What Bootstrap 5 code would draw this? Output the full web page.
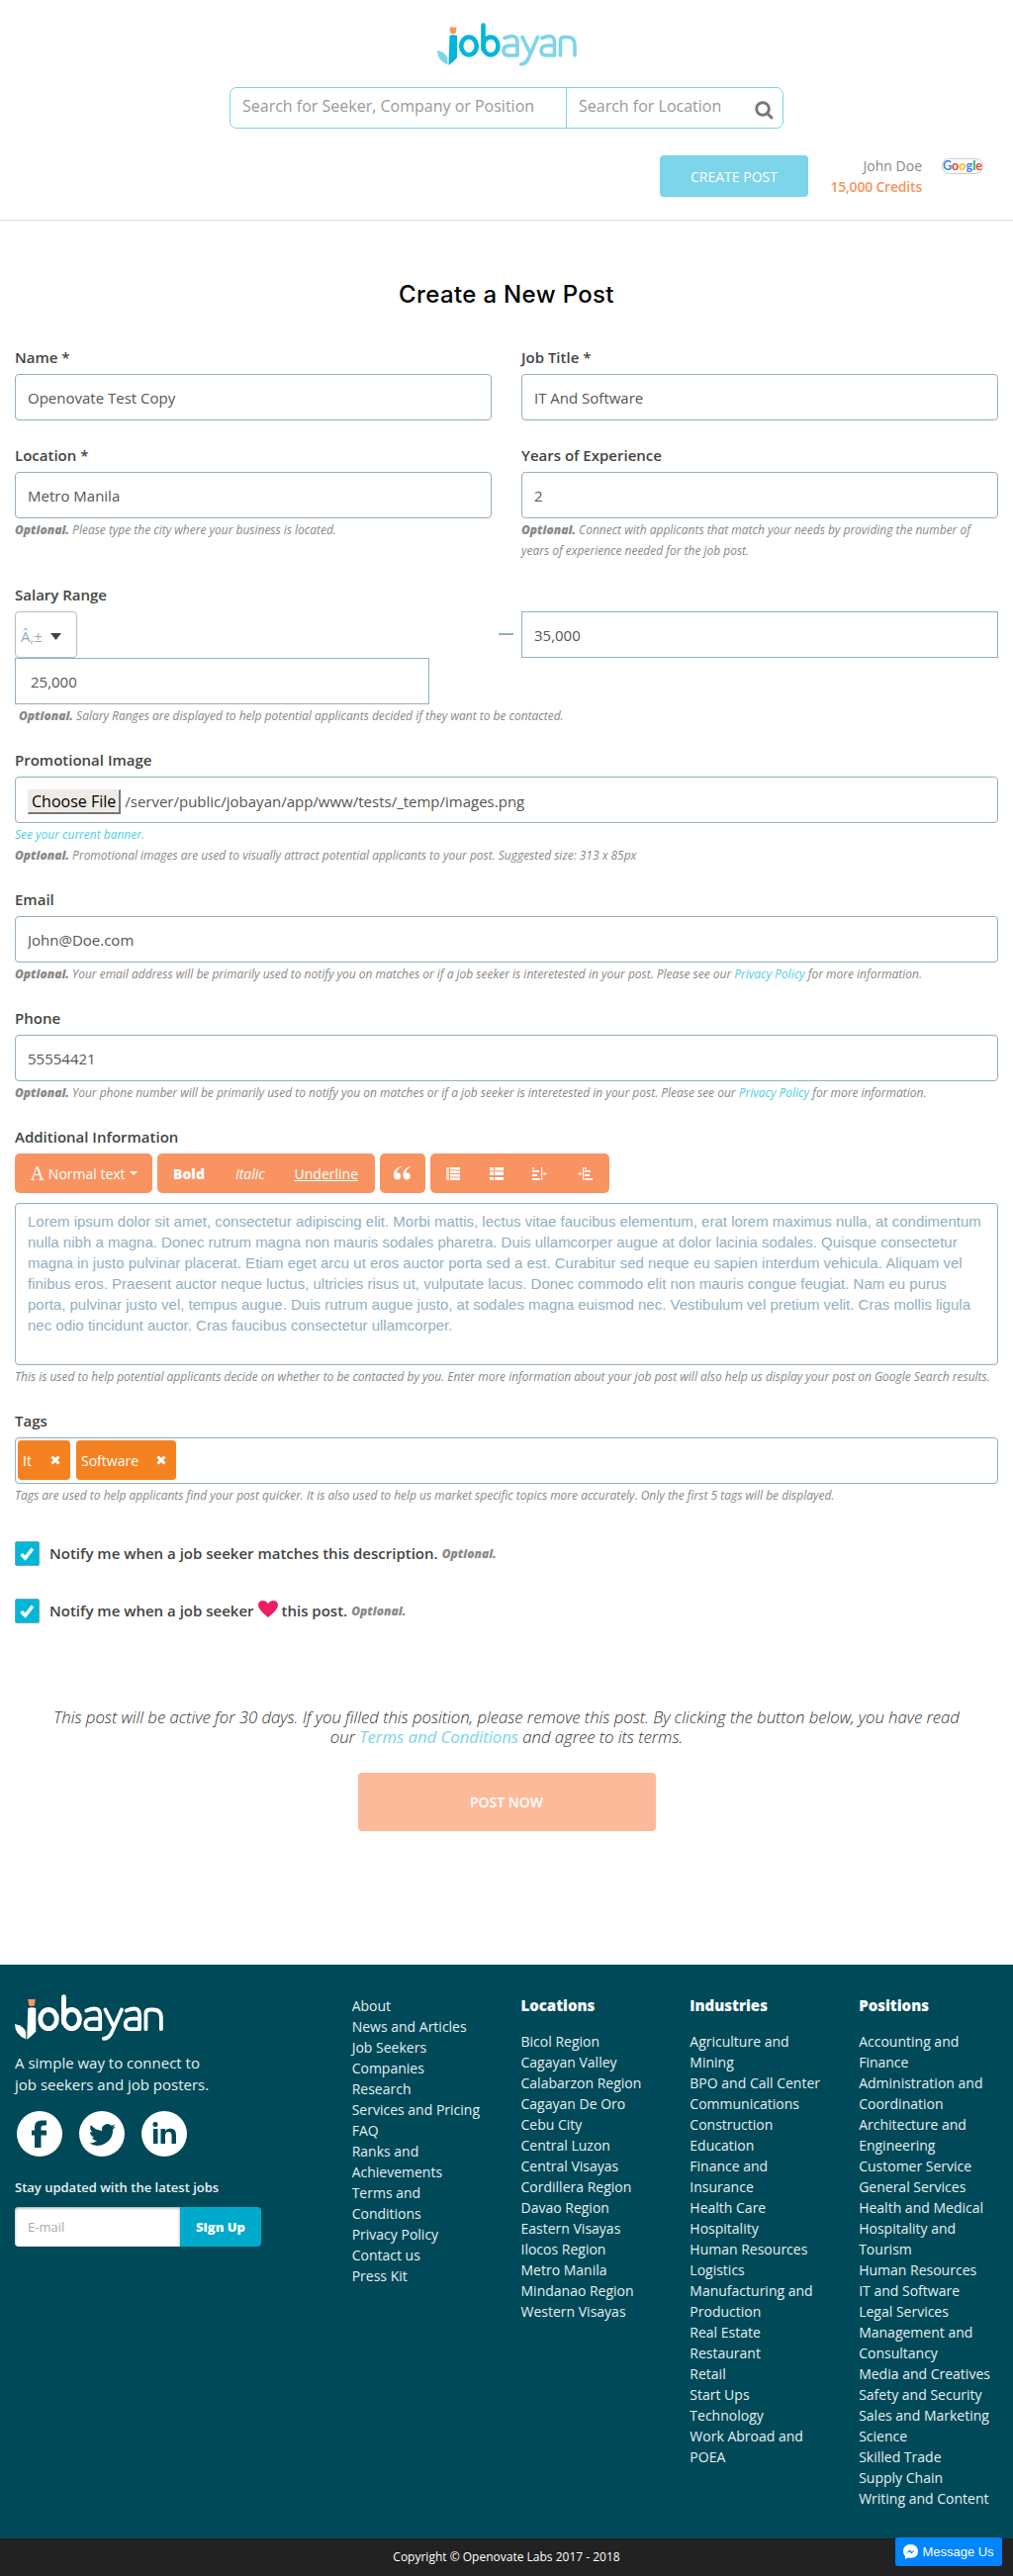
<!DOCTYPE html>
<html lang="en">
<head>
<meta charset="utf-8">
<meta name="viewport" content="width=device-width, initial-scale=1">
<title>Create a New Post - Jobayan</title>
<link href="https://cdn.jsdelivr.net/npm/bootstrap@5.3.0/dist/css/bootstrap.min.css" rel="stylesheet">
<style>
body{font-family:"Open Sans","Noto Sans",sans-serif;font-size:15px;line-height:21px;color:#444;background:#fff}
a{text-decoration:none}
svg{display:block}
.site-head{height:223px;border-bottom:1px solid #ddd}
.brand-logo{width:141px;height:44px;margin:23px auto 0}
.searchbar{width:560px;height:42px;margin-top:21px;border:1px solid #7ad5e9;border-radius:7px}
.searchbar input{border:0;background:none;outline:0;font-size:16px;color:#555;padding:0 12px 5px;height:40px;min-width:0}
.searchbar input::placeholder{color:#999;opacity:1}
.search-main{width:340px;flex:none;border-right:1px solid #7ad5e9!important}
.account{margin-top:27px;padding-right:30px}
.btn-create{width:150px;height:42px;background:#7dd5e9;color:#fff;font-size:14px;border-radius:4px;border:0}
.user-box{width:115px;color:#888;font-size:14px}
.credits{color:#fa9362;font-weight:600;letter-spacing:-.2px}
.google-pill{width:42px;height:16px;margin:3px 0 0 20px}
.page-title{font-family:Inter,"Open Sans",sans-serif;font-size:24px;line-height:30px;font-weight:500;letter-spacing:.35px;color:#000;margin:60px 0 38px}
.form-wrap{padding:0 15px}
.form-wrap .row{--bs-gutter-x:30px}
.block-gap{margin-top:25px}
.hint + .block-gap{margin-top:24px}
.lbl{display:block;font-weight:600;line-height:21px;margin-bottom:6px;color:#444}
.field{display:block;height:47px;border:1px solid #92afbf;border-radius:4px;font-size:15px;color:#555;padding:0 12px}
.square{border-radius:0}
.hint{font-size:12px;font-style:italic;color:#888;line-height:21px;padding-top:1px;margin-bottom:-1px;letter-spacing:-.012px}
.hint b,.opt{font-weight:800;font-size:12px;font-style:italic;color:#888}
.hint a{color:#4ccfe3}
.currency{width:63px;height:47px;border:1px solid #bbb;border-radius:4px;color:#92afbf;padding:3px 15px 0 5px}
.low{width:419px;padding-left:15px}
.salary-high{margin-left:-23px}
.dash{width:15px;height:2px;background:#92afbf;margin:22px 8px 0 0}
.choose{background:#efebe7;border:1px solid;border-color:#efebe7 #777 #777 #efebe7;border-width:1px 2px 2px 1px;color:#000;font-size:16px;line-height:22px;padding:0 3px 0 3px;margin-right:4px}
.toolbar-row{gap:5px;margin-bottom:10px}
.tool{height:40px;background:#fa9362;border-radius:5px;color:#fff;font-size:14px}
.info{height:164px;border:1px solid #92afbf;border-radius:4px;padding:7px 12px;color:#92afbf;font-family:"Liberation Sans",Arial,sans-serif;font-size:15px;line-height:21px}
.tagline{height:47px;border:1px solid #92afbf;border-radius:4px;padding:2px;gap:6px}
.tagchip{height:40px;border-radius:4px;background:#f58220;color:#fff;padding:0 10px 0 5px;font-size:14px}
.tickbox{width:25px;height:25px;border:1px solid #6ba9bd;border-radius:2px;background:#00b6d9;margin-right:10px}
.notify{height:25px;font-weight:600}
.terms{font-size:16.8px;letter-spacing:-.05px;line-height:20px;font-weight:300;font-style:italic;color:#333;margin-top:85px;padding:0 30px}
.terms a{color:#7ad5e9;font-weight:400}
.btn-post{display:block;width:301px;height:59px;margin:26px auto 0;background:#fcba9b;color:#fff;border:0;border-radius:4px;font-weight:600;font-size:14px}
.foot{height:580px;margin-top:135px;background:#004958;color:#e9f1f3}
.foot-brand{width:341px;padding:30px 15px 0}
.foot-col{width:171px;padding:31px 0 0 15px;font-size:14px;line-height:21px}
.foot-col.first-col{padding-right:15px}
.foot-col a{display:block;color:#e6eff1}
.foot-col h2{font-size:15px;line-height:21px;font-weight:800;color:#fff;margin:0 0 15px}
.foot-col div{padding-right:15px}
.mail{width:167px;height:40px;background:#fff;border:0;border-radius:4px 0 0 4px;padding:0 13px;font-size:13px;box-shadow:inset 0 1px 3px #999}
.mail::placeholder{color:#aaa;opacity:1}
.btn-sign{width:82px;height:40px;background:#00aacb;color:#fff;border:0;border-radius:0 4px 4px 0;font-size:13px;font-weight:800}
.copyright{height:38px;background:#222;color:#fff;font-size:12px;line-height:38px}
.msg{position:fixed;right:11px;bottom:10px;width:108px;height:29px;background:#0084ff;border-radius:3px;color:#fff;font:13px "Liberation Sans",Arial,sans-serif}
</style>
</head>
<body>
<svg width="0" height="0" class="position-absolute">
<defs>
<g id="jobayan" fill="none" stroke-linecap="round" stroke-linejoin="round">
<path d="M0 28Q9 30 10.500 36V42.500Q0 38 0 28Z" fill="var(--b)"/>
<path d="M12.500 13Q16 11.500 20 13V35Q18 38 11.500 43Z" fill="var(--a)"/>
<path d="M12.500 4.500h7l-.8 6q-2.700 1.300-5.400 0Z" fill="#fa9362"/>
<g stroke="var(--a)" stroke-width="4.600"><ellipse cx="32" cy="23.500" rx="7.800" ry="9"/><path d="M46.500 2.500V27"/><ellipse cx="54" cy="23.500" rx="7.500" ry="9"/></g>
<g stroke="var(--b)" stroke-width="3.600"><path d="M68 15.500Q81 10 81 20V33M81 23H74Q67 23 67 28.500Q67 33 73 33H81M86 14.500L93.500 30M101.500 14.500L93 34Q90 42 84.500 42M106 15.500Q118.500 10 118.500 20V33M118.500 23H112Q105 23 105 28.500Q105 33 111 33H118.500M124.500 33V18Q124.500 14.500 129 14.500H131Q139 14.500 139 22V33"/></g>
</g>
<path id="tick" d="M5.500 12L9.500 16L17 6.500" fill="none" stroke="#fff" stroke-width="3.500"/>
<path id="cross" d="M1.500 1.500L8.500 8.500M8.500 1.500L1.500 8.500" stroke="#fff" stroke-width="3"/>
</defs>
</svg>
<header class="site-head d-flex flex-column">
<svg class="brand-logo flex-shrink-0" viewBox="0 0 141 44" style="--a:#00b6d9;--b:#7dd5e9"><use href="#jobayan"/></svg>
<div class="searchbar d-flex mx-auto">
<input class="search-main" placeholder="Search for Seeker, Company or Position">
<input class="flex-grow-1" placeholder="Search for Location">
<svg class="flex-shrink-0 mt-2 pt-1 me-2" width="21" height="26" viewBox="0 0 21 22"><g fill="none" stroke="#777" stroke-width="2.900"><circle cx="9" cy="9" r="6.300"/><path d="M13.500 13.500L18 18" stroke-linecap="round"/></g></svg>
</div>
<div class="account d-flex justify-content-end">
<button class="btn-create">CREATE POST</button>
<div class="user-box text-end"><div>John Doe</div><div class="credits">15,000 Credits</div></div>
<svg class="google-pill" viewBox="0 0 42 16"><rect x=".5" y=".5" width="41" height="15" rx="7" fill="#fff" stroke="#ccc"/><text x="1" y="12" font-size="14" font-family="Lato" font-weight="700" textLength="40" lengthAdjust="spacingAndGlyphs"><tspan fill="#4285f4">G</tspan><tspan fill="#ea4335">o</tspan><tspan fill="#fbbc05">o</tspan><tspan fill="#4285f4">g</tspan><tspan fill="#34a853">l</tspan><tspan fill="#ea4335">e</tspan></text></svg>
</div>
</header>
<main class="form-wrap">
<h1 class="page-title text-center">Create a New Post</h1>
<div class="row">
<div class="col-6"><label class="lbl">Name *</label><input class="field w-100" value="Openovate Test Copy"></div>
<div class="col-6"><label class="lbl">Job Title *</label><input class="field w-100" value="IT And Software"></div>
</div>
<div class="row block-gap">
<div class="col-6"><label class="lbl">Location *</label><input class="field w-100" value="Metro Manila"><div class="hint"><b>Optional.</b> Please type the city where your business is located.</div></div>
<div class="col-6"><label class="lbl">Years of Experience</label><input class="field w-100" value="2"><div class="hint"><b>Optional.</b> Connect with applicants that match your needs by providing the number of years of experience needed for the job post.</div></div>
</div>
<section class="block-gap"><label class="lbl">Salary Range</label>
<div class="row"><div class="col-6"><div class="currency d-flex align-items-center justify-content-between">Â‚±<svg width="11" height="7"><path d="M0 0H11L5.500 7Z" fill="#444"/></svg></div></div>
<div class="col-6"><div class="salary-high d-flex"><div class="dash flex-shrink-0"></div><input class="field square flex-grow-1" value="35,000"></div></div></div>
<input class="field square low" value="25,000">
<div class="hint ps-1"><b>Optional.</b> Salary Ranges are displayed to help potential applicants decided if they want to be contacted.</div></section>
<section class="block-gap"><label class="lbl">Promotional Image</label>
<div class="field d-flex align-items-center pt-1"><span class="choose">Choose File</span><span>/server/public/jobayan/app/www/tests/_temp/images.png</span></div>
<div class="hint"><a href="#">See your current banner.</a><br><b>Optional.</b> Promotional images are used to visually attract potential applicants to your post. Suggested size: 313 x 85px</div></section>
<section class="block-gap"><label class="lbl">Email</label><input class="field w-100" value="John@Doe.com">
<div class="hint"><b>Optional.</b> Your email address will be primarily used to notify you on matches or if a job seeker is interetested in your post. Please see our <a href="#">Privacy Policy</a> for more information.</div></section>
<section class="block-gap"><label class="lbl">Phone</label><input class="field w-100" value="55554421">
<div class="hint"><b>Optional.</b> Your phone number will be primarily used to notify you on matches or if a job seeker is interetested in your post. Please see our <a href="#">Privacy Policy</a> for more information.</div></section>
<section class="block-gap"><label class="lbl">Additional Information</label>
<div class="toolbar-row d-flex">
<div class="tool d-flex align-items-center justify-content-center" style="width:139px"><span style="font:20px 'Liberation Serif',serif;margin-right:4px">A</span>Normal text<svg width="8" height="4" class="ms-1"><path d="M0 0H8L4 4Z" fill="#fff"/></svg></div>
<div class="tool d-flex align-items-center" style="width:220px;padding:0 17px 0 16px"><b style="font-weight:800">Bold</b><i style="margin-left:31px">Italic</i><u class="ms-auto">Underline</u></div>
<div class="tool d-flex align-items-center justify-content-center" style="width:46px"><svg width="18" height="14" viewBox="0 0 18 14"><path d="M7.500 0V.8Q3.500 2.500 3 6.500Q7.200 6 7.200 9.800Q7.200 13.500 3.800 13.500Q0 13.500 0 8.500Q0 2 7.500 0ZM17 0V.8Q13 2.500 12.500 6.500Q16.700 6 16.700 9.800Q16.700 13.500 13.300 13.500Q9.500 13.500 9.500 8.500Q9.500 2 17 0Z" fill="#fff"/></svg></div>
<div class="tool d-flex align-items-center justify-content-between" style="width:181px;padding:0 16px">
<svg width="14" height="13" fill="#fff"><path opacity=".65" d="M0 0h3v13H0z"/><path d="M4 0h10v2H4zM4 4h10v2H4zM4 7h10v2H4zM4 11h10v2H4z"/><path opacity=".5" d="M4 2h10v2H4zM4 9h10v2H4z"/></svg>
<svg width="14" height="13" fill="#fff"><path d="M0 0h4v3H0zM5 0h9v3H5zM0 5h4v3H0zM5 5h9v3H5zM0 10h4v3H0zM5 10h9v3H5z"/><path opacity=".4" d="M0 3h14v2H0z"/></svg>
<svg width="16" height="13" fill="#fff"><path d="M0 0h2v2H0zM0 3h7v2H0zM0 7h5v2H0zM0 11h8v2H0zM9 0h1.200v13H9zM11 6.500L13 4.500V6h2v1h-2v1.500z"/></svg>
<svg width="16" height="13" fill="#fff"><path d="M7 0h2v2H7zM7 3h6v2H7zM7 7h5v2H7zM7 11h8v2H7zM5 0h1.200v13H5zM4 6.500L2 4.500V6H0v1h2v1.500z"/></svg>
</div></div>
<div class="info">Lorem ipsum dolor sit amet, consectetur adipiscing elit. Morbi mattis, lectus vitae faucibus elementum, erat lorem maximus nulla, at condimentum nulla nibh a magna. Donec rutrum magna non mauris sodales pharetra. Duis ullamcorper augue at dolor lacinia sodales. Quisque consectetur magna in justo pulvinar placerat. Etiam eget arcu ut eros auctor porta sed a est. Curabitur sed neque eu sapien interdum vehicula. Aliquam vel finibus eros. Praesent auctor neque luctus, ultricies risus ut, vulputate lacus. Donec commodo elit non mauris congue feugiat. Nam eu purus porta, pulvinar justo vel, tempus augue. Duis rutrum augue justo, at sodales magna euismod nec. Vestibulum vel pretium velit. Cras mollis ligula nec odio tincidunt auctor. Cras faucibus consectetur ullamcorper.</div>
<div class="hint text-nowrap">This is used to help potential applicants decide on whether to be contacted by you. Enter more information about your job post will also help us display your post on Google Search results.</div></section>
<section class="block-gap"><label class="lbl">Tags</label>
<div class="tagline d-flex"><span class="tagchip d-flex align-items-center justify-content-between" style="width:53px">It<svg width="10" height="10"><use href="#cross"/></svg></span><span class="tagchip d-flex align-items-center justify-content-between" style="width:101px">Software<svg width="10" height="10"><use href="#cross"/></svg></span></div>
<div class="hint">Tags are used to help applicants find your post quicker. It is also used to help us market specific topics more accurately. Only the first 5 tags will be displayed.</div></section>
<div class="notify d-flex align-items-center" style="margin-top:37px"><span class="tickbox"><svg width="23" height="23"><use href="#tick"/></svg></span>Notify me when a job seeker matches this description.<span class="opt ms-1">Optional.</span></div>
<div class="notify d-flex align-items-center" style="margin-top:33px"><span class="tickbox"><svg width="23" height="23"><use href="#tick"/></svg></span>Notify me when a job seeker<svg width="20" height="17" viewBox="0 0 20 17" style="margin:-4px 4px 0"><path d="M10 17Q0 9 0 5Q0 0 5 0Q8 0 10 3Q12 0 15 0Q20 0 20 5Q20 9 10 17Z" fill="#e91e63"/></svg>this post.<span class="opt ms-1">Optional.</span></div>
<p class="terms text-center mb-0">This post will be active for 30 days. If you filled this position, please remove this post. By clicking the button below, you have read our <a href="#">Terms and Conditions</a> and agree to its terms.</p>
<button class="btn-post">POST NOW</button>
</main>
<footer>
<div class="foot d-flex">
<div class="foot-brand">
<svg width="150" height="47" viewBox="0 0 141 44" style="--a:#fff;--b:#fff"><use href="#jobayan"/></svg>
<p style="font-size:15px;line-height:22px;margin:11px 0 16px">A simple way to connect to<br>job seekers and job posters.</p>
<div class="d-flex" style="gap:17px;margin-left:2px">
<svg width="46" height="46"><circle cx="23" cy="23" r="23" fill="#fff"/><path d="M30 9.500V14.500H27Q24.500 14.500 24.500 17V19.500H30V24.500H24.500V37H18V24.500H15V19.500H18V16Q18 9.500 25 9.500Z" fill="#004958"/></svg>
<svg width="46" height="46"><circle cx="23" cy="23" r="23" fill="#fff"/><g transform="translate(10 10.500) scale(1.120)"><path d="M24 4.600a10 10 0 0 1-2.800.8 5 5 0 0 0 2.100-2.700 10 10 0 0 1-3.100 1.200 4.900 4.900 0 0 0-8.400 4.500A14 14 0 0 1 1.700 3.200a4.900 4.900 0 0 0 1.500 6.500 5 5 0 0 1-2.200-.6 4.900 4.900 0 0 0 3.900 4.900 5 5 0 0 1-2.200.1 4.900 4.900 0 0 0 4.600 3.400A10 10 0 0 1 0 19.500a14 14 0 0 0 21.500-12.400A10 10 0 0 0 24 4.600Z" fill="#004958"/></g></svg>
<svg width="46" height="46"><circle cx="23" cy="23" r="23" fill="#fff"/><path d="M12 18h4.500v15H12zM19.500 18H24v2q2-2.500 5-2.500 6 0 6 6.500V33h-4.500v-8q0-4-3-4-3.500 0-3.500 4v8h-4.500z" fill="#004958"/><circle cx="14" cy="13.500" r="2.500" fill="#004958"/></svg>
</div>
<div style="font-size:13px;font-weight:600;margin:21px 0 9px">Stay updated with the latest jobs</div>
<div class="d-flex"><input class="mail" placeholder="E-mail"><button class="btn-sign">Sign Up</button></div>
</div>
<nav class="foot-col first-col"><a href="#">About</a><a href="#">News and Articles</a><a href="#">Job Seekers</a><a href="#">Companies</a><a href="#">Research</a><a href="#">Services and Pricing</a><a href="#">FAQ</a><a href="#">Ranks and Achievements</a><a href="#">Terms and Conditions</a><a href="#">Privacy Policy</a><a href="#">Contact us</a><a href="#">Press Kit</a></nav>
<nav class="foot-col"><h2>Locations</h2><div><a href="#">Bicol Region</a><a href="#">Cagayan Valley</a><a href="#">Calabarzon Region</a><a href="#">Cagayan De Oro</a><a href="#">Cebu City</a><a href="#">Central Luzon</a><a href="#">Central Visayas</a><a href="#">Cordillera Region</a><a href="#">Davao Region</a><a href="#">Eastern Visayas</a><a href="#">Ilocos Region</a><a href="#">Metro Manila</a><a href="#">Mindanao Region</a><a href="#">Western Visayas</a></div></nav>
<nav class="foot-col"><h2>Industries</h2><div><a href="#">Agriculture and Mining</a><a href="#">BPO and Call Center</a><a href="#">Communications</a><a href="#">Construction</a><a href="#">Education</a><a href="#">Finance and Insurance</a><a href="#">Health Care</a><a href="#">Hospitality</a><a href="#">Human Resources</a><a href="#">Logistics</a><a href="#">Manufacturing and Production</a><a href="#">Real Estate</a><a href="#">Restaurant</a><a href="#">Retail</a><a href="#">Start Ups</a><a href="#">Technology</a><a href="#">Work Abroad and POEA</a></div></nav>
<nav class="foot-col"><h2>Positions</h2><div><a href="#">Accounting and Finance</a><a href="#">Administration and Coordination</a><a href="#">Architecture and Engineering</a><a href="#">Customer Service</a><a href="#">General Services</a><a href="#">Health and Medical</a><a href="#">Hospitality and Tourism</a><a href="#">Human Resources</a><a href="#">IT and Software</a><a href="#">Legal Services</a><a href="#">Management and Consultancy</a><a href="#">Media and Creatives</a><a href="#">Safety and Security</a><a href="#">Sales and Marketing</a><a href="#">Science</a><a href="#">Skilled Trade</a><a href="#">Supply Chain</a><a href="#">Writing and Content</a></div></nav>
</div>
<div class="copyright text-center">Copyright © Openovate Labs 2017 - 2018</div>
</footer>
<a href="#" class="msg d-flex align-items-center justify-content-center"><svg width="15" height="15" viewBox="0 0 15 15" class="me-1"><path d="M7.500 0C3 0 0 3 0 7Q0 10 2 12V15L5 13.500Q15 15 15 7C15 3 12 0 7.500 0Z" fill="#fff"/><path d="M3 9L6.500 5.500L8.500 7.500L12 5.500L8.500 9.500L6.500 7.500Z" fill="#0084ff"/></svg>Message Us</a>
<script src="https://cdn.jsdelivr.net/npm/bootstrap@5.3.0/dist/js/bootstrap.bundle.min.js"></script>
</body>
</html>
